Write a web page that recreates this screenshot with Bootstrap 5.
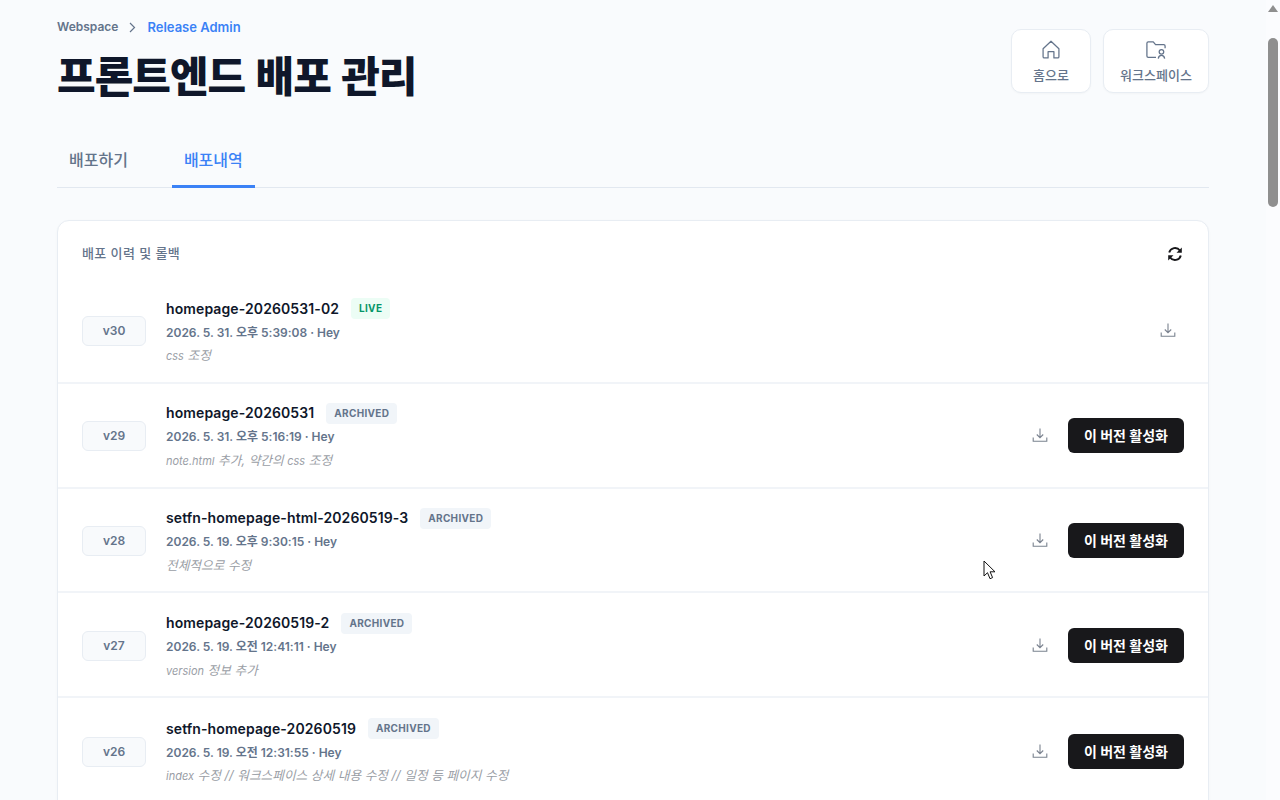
<!DOCTYPE html>
<html lang="ko">
<head>
<meta charset="utf-8">
<title>프론트엔드 배포 관리</title>
<link href="https://cdn.jsdelivr.net/npm/bootstrap@5.3.0/dist/css/bootstrap.min.css" rel="stylesheet">
<style>
html,body{height:800px;overflow:hidden;}
body{background:#f9fbfd;font-family:Inter,"Noto Sans CJK KR",sans-serif;color:#0f172a;}
.shell{width:1266px;height:800px;overflow:hidden;padding:0 57px;}
.crumbs{padding-top:17px;font-size:12px;line-height:20px;font-weight:600;color:#64748b;}
.crumbs .here{color:#3b82f6;font-size:13px;}
.crumbs svg{margin:0 10px 0 10px;}
.page-title{font-size:42px;line-height:53px;font-weight:900;letter-spacing:-1px;word-spacing:3px;margin:13px 0 0;color:#0f172a;}
.quick{padding-top:29px;column-gap:12px;}
.quick-btn{height:64px;padding-top:2px;border:1px solid #e8edf3;border-radius:10px;background:#fff;color:#64748b;font-size:13px;line-height:18px;font-weight:500;text-decoration:none;box-shadow:0 1px 2px rgba(15,23,42,.03);}
.quick-btn span{margin-top:6px;}
.quick-home{width:80px;}
.quick-work{width:106px;}
.tabbar{margin-top:35px;height:50px;border-bottom:1px solid #e2e8f0;}
.tab-item{font-size:16px;font-weight:500;color:#64748b;padding:0 12px;height:50px;line-height:44px;border-bottom:3px solid transparent;}
.tab-item.on{color:#3b82f6;border-bottom-color:#3b82f6;}
.tab-gap{margin-right:32px;}
.panel{margin-top:32px;background:#fff;border:1px solid #e8edf3;border-radius:12px 12px 0 0;box-shadow:0 1px 3px rgba(15,23,42,.03);}
.panel-head{height:58px;padding:8px 25px 0 24px;font-size:13px;font-weight:500;letter-spacing:.4px;color:#64748b;}
.rel-row{height:104.8px;padding:0 24px;border-bottom:2px solid #f1f4f8;}
.rel-row:last-child{border-bottom:0;}
.ver{width:64px;height:30px;margin-top:2px;background:#f8fafc;border:1px solid #e8edf3;border-radius:6px;font-size:12px;font-weight:600;color:#64748b;margin-right:20px;}
.rel-body{padding-top:2px;}
.rel-name{font-size:14px;line-height:22px;font-weight:600;letter-spacing:.1px;color:#0f172a;}
.tag{font-size:10px;line-height:21px;height:21px;font-weight:700;letter-spacing:.3px;border-radius:4px;padding:0 8px;margin-left:12px;background:#f1f5f9;color:#64748b;}
.tag.live{background:#ecfdf5;color:#059669;}
.rel-meta{font-size:12px;line-height:18px;font-weight:600;color:#64748b;margin-top:4px;}
.rel-note{font-size:12.7px;line-height:18px;font-style:italic;color:#9a9ea6;margin-top:5.500px;}
.rel-note em{font-size:11px;}
.dl{color:#7a828f;display:flex;}
.activate{width:116px;height:35px;margin-top:1px;background:#18181b;color:#fff;border:0;border-radius:6px;font-size:14px;font-weight:700;padding:0;margin-left:20px;}
.bar{position:fixed;top:0;right:0;width:14px;height:800px;background:#fbfcfe;}
.bar i{position:absolute;left:2px;top:38px;width:10px;height:169px;border-radius:5px;background:#8f8f8f;}
.bar b{position:absolute;left:2px;top:5px;width:0;height:0;border:5px solid transparent;border-top:0;border-bottom:7px solid #8f8f8f;}
.pointer{position:fixed;left:983px;top:560px;}
</style>
</head>
<body>
<div class="shell">
  <div class="d-flex justify-content-between">
    <div>
      <div class="crumbs d-flex align-items-center"><span>Webspace</span><svg width="9" height="11" viewBox="0 0 9 11" fill="none" stroke="#64748b" stroke-width="1.2"><path d="M2 1l4.500 4.500L2 10"/></svg><span class="here">Release Admin</span></div>
      <h1 class="page-title">프론트엔드 배포 관리</h1>
    </div>
    <div class="quick d-flex align-items-start">
      <a class="quick-btn quick-home d-flex flex-column align-items-center justify-content-center">
        <svg width="20" height="20" viewBox="0 0 24 24" fill="none" stroke="#64748b" stroke-width="1.5" stroke-linejoin="round"><path d="M2.500 10.500 12 1.500l9.500 9V20a1.500 1.500 0 0 1-1.500 1.500H15.500V14h-7v7.500H4A1.500 1.500 0 0 1 2.500 20z"/></svg>
        <span>홈으로</span>
      </a>
      <a class="quick-btn quick-work d-flex flex-column align-items-center justify-content-center">
        <svg width="22" height="20" viewBox="0 0 24 22" fill="none" stroke="#64748b" stroke-width="1.4" stroke-linejoin="round"><path d="M12 19H3.500A1.500 1.500 0 0 1 2 17.500V3.500A1.500 1.500 0 0 1 3.500 2H9l2.500 3h9A1.500 1.500 0 0 1 22 6.500V9"/><circle cx="18" cy="13" r="2.500"/><path d="M14.500 20.500c.3-2.500 1.600-3.500 3.500-3.500s3.200 1 3.500 3.500"/></svg>
        <span>워크스페이스</span>
      </a>
    </div>
  </div>

  <div class="tabbar d-flex">
    <div class="tab-item tab-gap">배포하기</div>
    <div class="tab-item on">배포내역</div>
  </div>

  <div class="panel">
    <div class="panel-head d-flex align-items-center justify-content-between">
      <span>배포 이력 및 롤백</span>
      <svg width="16" height="16" viewBox="0 0 16 16" fill="none" stroke="#18181b" stroke-width="1.9"><path d="M2.200 6.500A6 6 0 0 1 12.900 4.500"/><path d="M13.800 9.500A6 6 0 0 1 3.100 11.500"/><path d="M14.800 1.500v5.300H9.500z" fill="#18181b" stroke="none"/><path d="M1.200 14.500V9.200H6.500z" fill="#18181b" stroke="none"/></svg>
    </div>

    <div class="rel-row d-flex align-items-center">
      <div class="ver d-flex align-items-center justify-content-center">v30</div>
      <div class="rel-body flex-grow-1">
        <div class="d-flex align-items-center"><span class="rel-name">homepage-20260531-02</span><span class="tag live">LIVE</span></div>
        <div class="rel-meta">2026. 5. 31. 오후 5:39:08 · Hey</div>
        <div class="rel-note"><em>css</em> 조정</div>
      </div>
      <span class="dl me-2"><svg width="16" height="16" viewBox="0 0 16 16" fill="none" stroke="currentColor" stroke-width="1.100"><path d="M8 1.500v9M4.800 7.500 8 10.700l3.200-3.200"/><path d="M1.200 10.500v3.800h13.600v-3.800"/></svg></span>
    </div>

    <div class="rel-row d-flex align-items-center">
      <div class="ver d-flex align-items-center justify-content-center">v29</div>
      <div class="rel-body flex-grow-1">
        <div class="d-flex align-items-center"><span class="rel-name">homepage-20260531</span><span class="tag">ARCHIVED</span></div>
        <div class="rel-meta">2026. 5. 31. 오후 5:16:19 · Hey</div>
        <div class="rel-note"><em>note.html</em> 추가, 약간의 <em>css</em> 조정</div>
      </div>
      <span class="dl"><svg width="16" height="16" viewBox="0 0 16 16" fill="none" stroke="currentColor" stroke-width="1.100"><path d="M8 1.500v9M4.800 7.500 8 10.700l3.200-3.200"/><path d="M1.200 10.500v3.800h13.600v-3.800"/></svg></span>
      <button class="activate btn">이 버전 활성화</button>
    </div>

    <div class="rel-row d-flex align-items-center">
      <div class="ver d-flex align-items-center justify-content-center">v28</div>
      <div class="rel-body flex-grow-1">
        <div class="d-flex align-items-center"><span class="rel-name">setfn-homepage-html-20260519-3</span><span class="tag">ARCHIVED</span></div>
        <div class="rel-meta">2026. 5. 19. 오후 9:30:15 · Hey</div>
        <div class="rel-note">전체적으로 수정</div>
      </div>
      <span class="dl"><svg width="16" height="16" viewBox="0 0 16 16" fill="none" stroke="currentColor" stroke-width="1.100"><path d="M8 1.500v9M4.800 7.500 8 10.700l3.200-3.200"/><path d="M1.200 10.500v3.800h13.600v-3.800"/></svg></span>
      <button class="activate btn">이 버전 활성화</button>
    </div>

    <div class="rel-row d-flex align-items-center">
      <div class="ver d-flex align-items-center justify-content-center">v27</div>
      <div class="rel-body flex-grow-1">
        <div class="d-flex align-items-center"><span class="rel-name">homepage-20260519-2</span><span class="tag">ARCHIVED</span></div>
        <div class="rel-meta">2026. 5. 19. 오전 12:41:11 · Hey</div>
        <div class="rel-note"><em>version</em> 정보 추가</div>
      </div>
      <span class="dl"><svg width="16" height="16" viewBox="0 0 16 16" fill="none" stroke="currentColor" stroke-width="1.100"><path d="M8 1.500v9M4.800 7.500 8 10.700l3.200-3.200"/><path d="M1.200 10.500v3.800h13.600v-3.800"/></svg></span>
      <button class="activate btn">이 버전 활성화</button>
    </div>

    <div class="rel-row d-flex align-items-center">
      <div class="ver d-flex align-items-center justify-content-center">v26</div>
      <div class="rel-body flex-grow-1">
        <div class="d-flex align-items-center"><span class="rel-name">setfn-homepage-20260519</span><span class="tag">ARCHIVED</span></div>
        <div class="rel-meta">2026. 5. 19. 오전 12:31:55 · Hey</div>
        <div class="rel-note"><em>index</em> 수정 // 워크스페이스 상세 내용 수정 // 일정 등 페이지 수정</div>
      </div>
      <span class="dl"><svg width="16" height="16" viewBox="0 0 16 16" fill="none" stroke="currentColor" stroke-width="1.100"><path d="M8 1.500v9M4.800 7.500 8 10.700l3.200-3.200"/><path d="M1.200 10.500v3.800h13.600v-3.800"/></svg></span>
      <button class="activate btn">이 버전 활성화</button>
    </div>
  </div>
</div>
<div class="bar"><b></b><i></i></div>
<svg class="pointer" width="13" height="20" viewBox="0 0 13 20"><path d="M1 1v15l3.500-3.300 2.500 6 2.600-1.100-2.500-5.800H12z" fill="#fff" stroke="#111" stroke-width="1"/></svg>
</body>
</html>
